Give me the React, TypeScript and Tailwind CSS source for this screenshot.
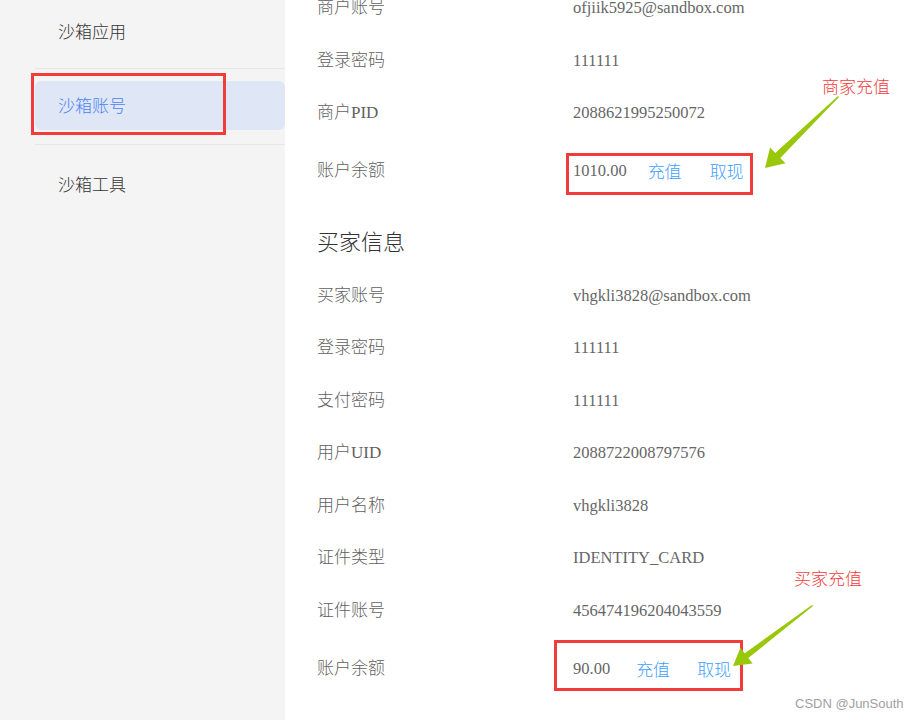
import React from 'react';

const serif = { fontFamily: '"Liberation Serif", "Noto Sans CJK SC", serif' };
const cjk = { fontFamily: '"Noto Sans CJK SC", "Liberation Sans", sans-serif' };

const merchantRows = [
  { label: '商户账号', value: 'ofjiik5925@sandbox.com' },
  { label: '登录密码', value: '111111' },
  { label: '商户PID', value: '2088621995250072' },
];

const buyerRows = [
  { label: '买家账号', value: 'vhgkli3828@sandbox.com' },
  { label: '登录密码', value: '111111' },
  { label: '支付密码', value: '111111' },
  { label: '用户UID', value: '2088722008797576' },
  { label: '用户名称', value: 'vhgkli3828' },
  { label: '证件类型', value: 'IDENTITY_CARD' },
  { label: '证件账号', value: '456474196204043559' },
];

function Label({ children }: { children: React.ReactNode }) {
  return (
    <div className="w-[256px] shrink-0 text-[17px] font-light text-[#5f5f5f] leading-6" style={serif}>
      {children}
    </div>
  );
}

function InfoRow({ label, value }: { label: string; value: string }) {
  return (
    <div className="flex items-center h-[52.5px]">
      <Label>{label}</Label>
      <div className="text-[16.5px] text-[#666] leading-6" style={serif}>{value}</div>
    </div>
  );
}

function BalanceRow({ amount, tight }: { amount: string; tight?: boolean }) {
  return (
    <div className="flex items-center h-[63px]">
      <Label>账户余额</Label>
      <div className="relative self-stretch flex items-center">
        <span className={`text-[16.5px] text-[#666] leading-6 ${tight ? 'mr-[21px]' : 'mr-[26px]'}`} style={serif}>
          {amount}
        </span>
        <a className={`text-[17px] font-light text-[#409eff] leading-6 cursor-pointer ${tight ? 'mr-[28px]' : 'mr-[27px]'}`} style={cjk}>充值</a>
        <a className="text-[17px] font-light text-[#409eff] leading-6 cursor-pointer" style={cjk}>取现</a>
        {tight ? (
          <div className="absolute left-[-7px] top-[13px] w-[187px] h-[42px] border-[3px] border-[#f23b3b]" />
        ) : (
          <div className="absolute left-[-19px] top-[3px] w-[189px] h-[51px] border-[3px] border-[#f23b3b]" />
        )}
      </div>
    </div>
  );
}

export default function App() {
  return (
    <div className="relative flex w-[918px] h-[720px] overflow-hidden bg-white">
      {/* sidebar */}
      <aside className="relative w-[285px] shrink-0 bg-[#f4f4f4] font-light" style={serif}>
        <div className="h-[68px] pl-[58px] pt-[21px] text-[17px] leading-6 text-[#333]">沙箱应用</div>
        <div className="ml-[35px] border-t border-[#e6e6e6]" />
        <div className="pl-[35px] pt-[12px] pb-[14px]">
          <div className="h-[49px] flex items-center pl-[23px] pt-[3px] rounded-[6px] bg-[#dfe7f6] text-[17px] text-[#4b82f5]">
            沙箱账号
          </div>
        </div>
        <div className="ml-[35px] border-t border-[#e6e6e6]" />
        <div className="pl-[58px] pt-[29px] text-[17px] leading-6 text-[#333]">沙箱工具</div>
        <div className="absolute left-[31px] top-[73px] w-[195px] h-[62px] border-[3px] border-[#f23b3b]" />
      </aside>

      {/* content */}
      <main className="flex-1 pl-[32px] mt-[-18px]">
        {merchantRows.map((r) => (
          <InfoRow key={r.label + r.value} label={r.label} value={r.value} />
        ))}
        <BalanceRow amount="1010.00" tight />
        <div className="pt-[25px] pb-[12px] text-[22px] font-light leading-[30px] text-[#333]" style={serif}>买家信息</div>
        {buyerRows.map((r) => (
          <InfoRow key={r.label + r.value} label={r.label} value={r.value} />
        ))}
        <BalanceRow amount="90.00" />
      </main>

      {/* annotations */}
      <div className="absolute left-[822px] top-[74px] text-[17px] font-light leading-6 text-[#f23b3b]" style={cjk}>商家充值</div>
      <div className="absolute left-[794px] top-[566px] text-[17px] font-light leading-6 text-[#f23b3b]" style={cjk}>买家充值</div>
      <svg className="absolute inset-0 pointer-events-none" width="918" height="720" viewBox="0 0 918 720">
        <polygon
          points="838,96 839,97 780.3,157.9 785.5,163.2 765,168 770.1,147.6 775.3,152.9"
          fill="#99c70a"
        />
        <polygon
          points="812,605 813,606 748.3,658 752.6,663.5 733,666 740.4,647.7 744.7,653.2"
          fill="#99c70a"
        />
      </svg>
      <div className="absolute left-[795px] top-[696px] text-[13px] leading-4 text-[#a0a0a0]" style={{ fontFamily: '"Liberation Sans", Arial, sans-serif' }}>
        CSDN @JunSouth
      </div>
    </div>
  );
}
